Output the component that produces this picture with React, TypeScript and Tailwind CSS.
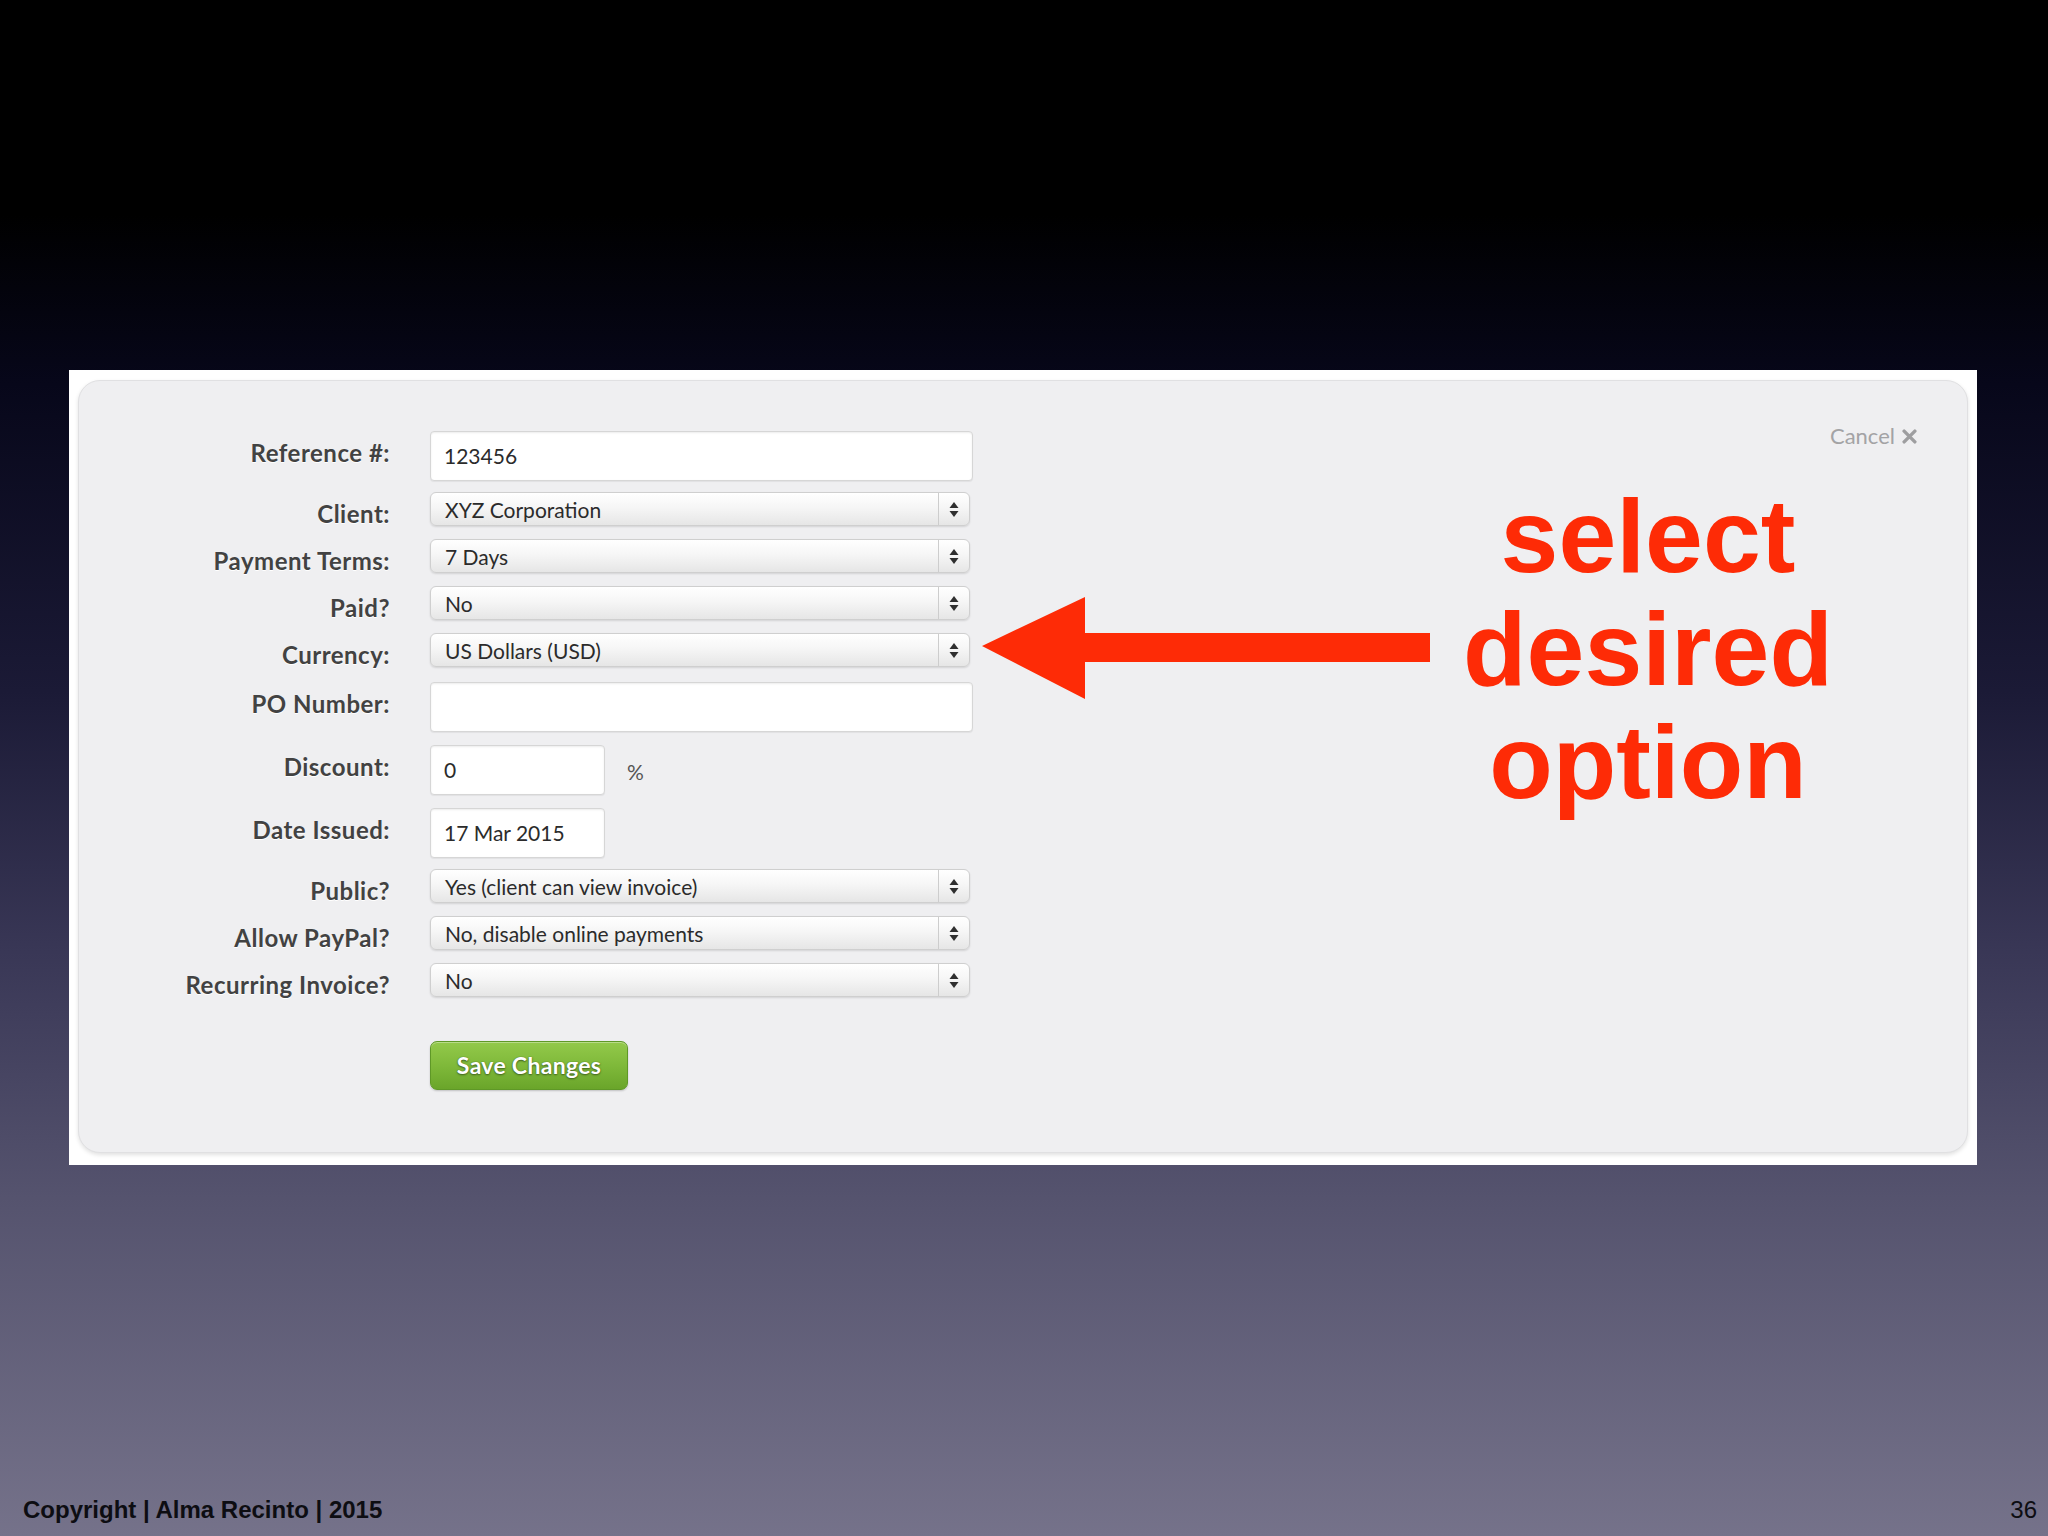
import React from 'react';

const labelFont = "font-['Lato','Open_Sans',sans-serif]";

function UpDown() {
  return (
    <svg width="10" height="17" viewBox="0 0 10 17" className="block">
      <path d="M5 1 L9.5 7 L0.5 7 Z" fill="#2f2f2f" />
      <path d="M5 16 L9.5 10 L0.5 10 Z" fill="#2f2f2f" />
    </svg>
  );
}

function Label({ children, short }: { children: React.ReactNode; short?: boolean }) {
  return (
    <div
      className={`w-[229px] shrink-0 ${short ? 'h-[34px]' : 'h-[50px]'} pt-[8px] text-right text-[24px] leading-[28px] font-bold tracking-[0.5px] whitespace-nowrap text-[#424242] [text-shadow:0_1px_0_#ffffff] ${labelFont}`}
    >
      {children}
    </div>
  );
}

function TextInput({ value, width = 'w-[543px]' }: { value: string; width?: string }) {
  return (
    <div
      className={`${width} h-[50px] flex items-center pl-[13px] bg-white border border-[#d6d6d6] rounded-[4px] shadow-[inset_0_1px_2px_rgba(0,0,0,0.08),0_1px_1px_rgba(0,0,0,0.06)] text-[21px] text-[#2b2b2b] ${labelFont}`}
    >
      {value}
    </div>
  );
}

function Select({ value }: { value: string }) {
  return (
    <div
      className={`w-[540px] h-[34px] flex items-stretch rounded-[6px] border border-[#cfcfcf] bg-[linear-gradient(180deg,#ffffff_0%,#f6f6f6_45%,#e6e6e6_100%)] shadow-[0_1px_2px_rgba(0,0,0,0.12)] text-[21px] text-[#2b2b2b] ${labelFont}`}
    >
      <div className="flex-1 flex items-center pl-[14px] leading-none">{value}</div>
      <div className="w-[31px] border-l border-[#cdcdcd] flex items-center justify-center">
        <UpDown />
      </div>
    </div>
  );
}

function Row({
  label,
  short,
  className = '',
  children,
}: {
  label: string;
  short?: boolean;
  className?: string;
  children: React.ReactNode;
}) {
  return (
    <div className={`flex items-start gap-[40px] ${className}`}>
      <Label short={short}>{label}</Label>
      {children}
    </div>
  );
}

export default function App() {
  return (
    <div className="w-[2048px] h-[1536px] flex flex-col overflow-hidden bg-[linear-gradient(180deg,#000000_0%,#000000_14%,#07071a_25%,#1b1a36_45%,#393756_62%,#55536e_78%,#75728a_100%)]">
      <div className="pt-[370px] pl-[69px]">
        <div className="w-[1908px] h-[795px] bg-white pt-[10px] px-[9px] pb-[12px]">
          <div className="relative h-full rounded-[22px] bg-[#efeff1] border border-[#e0e0e2] shadow-[0_2px_4px_rgba(0,0,0,0.12)] pt-[50px] pl-[82px]">
            <div className="flex flex-col gap-[13px]">
              <Row label="Reference #:">
                <TextInput value="123456" />
              </Row>
              <Row label="Client:" short className="-mt-[2px]">
                <Select value="XYZ Corporation" />
              </Row>
              <Row label="Payment Terms:" short>
                <Select value="7 Days" />
              </Row>
              <Row label="Paid?" short>
                <Select value="No" />
              </Row>
              <Row label="Currency:" short>
                <Select value="US Dollars (USD)" />
              </Row>
              <Row label="PO Number:" className="mt-[2px]">
                <TextInput value="" />
              </Row>
              <Row label="Discount:">
                <div className="flex items-center gap-[22px]">
                  <TextInput value="0" width="w-[175px]" />
                  <span className={`text-[21px] text-[#555] pt-[4px] ${labelFont}`}>%</span>
                </div>
              </Row>
              <Row label="Date Issued:">
                <TextInput value="17 Mar 2015" width="w-[175px]" />
              </Row>
              <Row label="Public?" short className="-mt-[2px]">
                <Select value="Yes (client can view invoice)" />
              </Row>
              <Row label="Allow PayPal?" short>
                <Select value="No, disable online payments" />
              </Row>
              <Row label="Recurring Invoice?" short>
                <Select value="No" />
              </Row>
              <div className="flex gap-[40px] mt-[31px]">
                <div className="w-[229px] shrink-0" />
                <button
                  className={`w-[198px] h-[49px] rounded-[7px] border border-[#5f9827] bg-[linear-gradient(180deg,#93c94a_0%,#7fb93a_50%,#6aa52a_100%)] shadow-[inset_0_1px_0_rgba(255,255,255,0.35),0_1px_2px_rgba(0,0,0,0.2)] text-white text-[23px] font-bold tracking-[0.3px] [text-shadow:0_1px_2px_#3d5f1c,0_0_1px_#4a6d22] ${labelFont}`}
                >
                  Save Changes
                </button>
              </div>
            </div>

            <div className={`absolute top-[43px] right-[50px] flex items-center gap-[7px] text-[22px] leading-[24px] text-[#a3a3a5] ${labelFont}`}>
              <span>Cancel</span>
              <svg width="15" height="15" viewBox="0 0 14 14">
                <path d="M2 2 L12 12 M12 2 L2 12" stroke="#9e9ea0" strokeWidth="3.2" strokeLinecap="round" />
              </svg>
            </div>

            <svg
              className="absolute left-[903px] top-[216px]"
              width="448"
              height="102"
              viewBox="0 0 448 102"
            >
              <polygon points="0,49 103,0 103,36 448,36 448,65 103,65 103,102" fill="#fe2b06" />
            </svg>

            <div className="absolute left-[1319px] top-[99px] w-[500px] text-center text-[104px] leading-[113px] font-bold text-[#fe2b06] font-['Liberation_Sans','Arial',sans-serif]">
              <div>select</div>
              <div>desired</div>
              <div>option</div>
            </div>
          </div>
        </div>
      </div>

      <div className="mt-auto flex items-end justify-between px-[23px] pb-[12px] pr-[11px] text-[24px] leading-[28px] text-[#0d0d12] font-['Liberation_Sans','Arial',sans-serif]">
        <span className="font-bold">Copyright | Alma Recinto | 2015</span>
        <span>36</span>
      </div>
    </div>
  );
}
